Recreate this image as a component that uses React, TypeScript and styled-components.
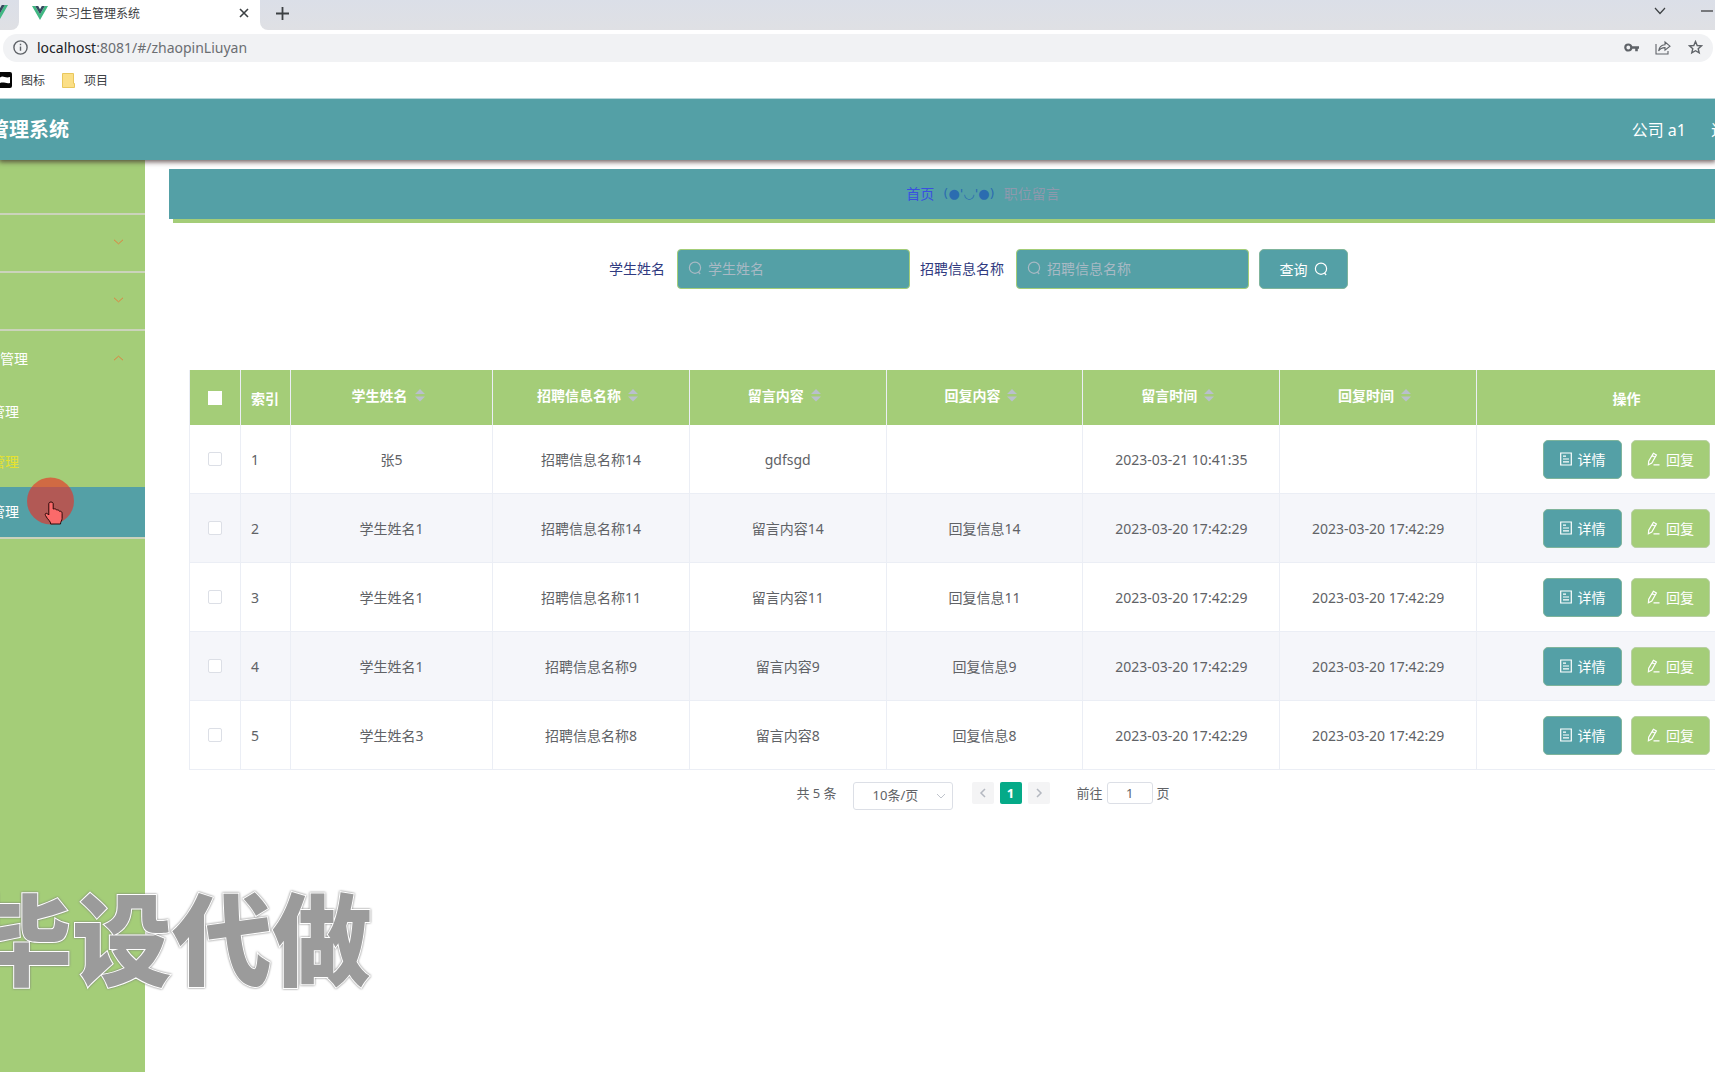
import React, { useState } from "react";
import styled, { createGlobalStyle } from "styled-components";

const teal = "#54a0a6";
const green = "#a4cd78";
const line = "#ebeef5";

const GlobalStyle = createGlobalStyle`
  *, *::before, *::after { box-sizing: border-box; }
  html, body, #root { height: 100%; }
  body {
    margin: 0;
    overflow: hidden;
    background: #fff;
    color: #606266;
    font-family: "Noto Sans", "Noto Sans CJK SC", sans-serif;
    font-size: 14px;
  }
  button, input, select { font: inherit; margin: 0; }
  button { cursor: pointer; padding: 0; border: 0; background: none; }
  a { text-decoration: none; }
`;

const Screen = styled.div`
  display: flex;
  flex-direction: column;
  height: 100%;
  overflow: hidden;
`;

/* Browser window */

const TabStrip = styled.div`
  display: flex;
  align-items: stretch;
  height: 30px;
  flex: none;
  background: #fff;
  color: #3c4043;
`;

const PreviousTab = styled.div`
  width: 19px;
  padding-top: 5px;
  overflow: hidden;
  border-bottom-right-radius: 8px;
  background: linear-gradient(#dbdfe8, #dfe0e4);
  svg { display: block; margin-left: -8px; }
`;

const ActiveTab = styled.div`
  display: flex;
  align-items: center;
  gap: 8px;
  width: 241px;
  padding: 0 11px 4px 13px;
  background: #fff;
  font-size: 12px;
  span { flex: 1; }
`;

const IconButton = styled.button`
  display: flex;
  align-items: center;
  justify-content: center;
  color: #3c4043;
`;

const StripRest = styled.div`
  flex: 1;
  display: flex;
  align-items: center;
  justify-content: space-between;
  padding: 0 0 4px 16px;
  background: linear-gradient(#dbdfe8, #dfe0e4);
  border-bottom-left-radius: 8px;
`;

const WindowControls = styled.div`
  display: flex;
  gap: 35px;
  margin: -4px -2px 0 0;
`;

const AddressBar = styled.div`
  flex: none;
  display: flex;
  align-items: center;
  gap: 9px;
  height: 28px;
  margin: 4px 2px 4px 3px;
  padding: 0 10px 2px 10px;
  border-radius: 14px;
  background: #f1f2f4;
  color: #5f6368;
`;

const Address = styled.div`
  flex: 1;
  color: #6b6e72;
  b { font-weight: 400; color: #202124; }
`;

const AddressActions = styled.div`
  display: flex;
  gap: 16px;
  ${IconButton} { width: 16px; height: 16px; color: #5f6368; }
`;

const Bookmarks = styled.nav`
  flex: none;
  display: flex;
  align-items: center;
  gap: 17px;
  height: 32px;
  padding-bottom: 4px;
  margin-left: -3px;
  font-size: 12px;
`;

const Bookmark = styled.a`
  display: flex;
  align-items: center;
  gap: 9px;
  color: #3c4043;
`;

/* Application shell */

const Header = styled.header`
  position: relative;
  z-index: 1;
  flex: none;
  display: flex;
  align-items: center;
  justify-content: space-between;
  height: 62px;
  padding-bottom: 2px;
  background: ${teal};
  border-top: 1px solid #b8d6da;
  box-shadow: 0 1px 5px 1px rgba(60, 40, 40, 0.75);
  clip-path: inset(0 0 -12px 0);
  color: #fff;
`;

const SystemName = styled.h1`
  margin: 0 0 0 -11px;
  font-size: 20px;
  font-weight: 700;
`;

const Account = styled.div`
  display: flex;
  gap: 25px;
  margin-right: -12px;
  font-size: 16px;
  white-space: nowrap;
  a { color: #fff; }
`;

const Body = styled.div`
  flex: 1;
  min-height: 0;
  display: flex;
`;

const Sidebar = styled.aside`
  flex: none;
  width: 145px;
  margin-top: -3px;
  background: ${green};
  overflow: hidden;
`;

const MenuGroup = styled.div`
  border-bottom: 2px solid #cbd3bb;
`;

const MenuTitle = styled.button`
  display: flex;
  align-items: center;
  justify-content: space-between;
  width: 100%;
  height: 56px;
  padding: 0 21px 2px 0;
  color: #fff;
`;

const MenuChevron = styled.svg`
  margin-left: auto;
`;

const MenuItem = styled.a<{ $state?: "current" | "hover" }>`
  display: flex;
  align-items: center;
  height: 50px;
  padding-bottom: 2px;
  color: ${(p) => (p.$state === "current" ? "#e6e22e" : "#fff")};
  background: ${(p) => (p.$state === "hover" ? teal : "transparent")};
  span { margin-left: -9px; }
`;

const Main = styled.main`
  flex: none;
  width: calc(100% - 63px);
  padding: 9px 0 0 24px;
`;

const Crumbs = styled.nav`
  display: flex;
  align-items: center;
  justify-content: center;
  gap: 9px;
  height: 50px;
  padding-bottom: 2px;
  background: ${teal};
  box-shadow: 4px 4px 0 ${green};
  color: #8d99ad;
  a { color: #3a4fe0; }
`;

const Kaomoji = styled.span`
  color: #2b6cb0;
  font-family: "DejaVu Sans", sans-serif;
  font-size: 13px;
`;

const Content = styled.section`
  padding: 30px 20px 0;
`;

const SearchForm = styled.form`
  display: flex;
  justify-content: center;
  gap: 10px;
  margin-left: -9px;
`;

const Field = styled.div`
  display: flex;
  align-items: center;
  gap: 12px;
  label { padding-bottom: 2px; color: #303a80; }
`;

const SearchBox = styled.div`
  display: flex;
  align-items: center;
  gap: 6px;
  width: 233px;
  height: 40px;
  padding: 0 10px 2px;
  border: 1px solid ${green};
  border-radius: 4px;
  background: ${teal};
  color: #a8b9c4;
  input {
    flex: 1;
    min-width: 0;
    padding: 0;
    border: 0;
    outline: 0;
    background: none;
    color: #fff;
    &::placeholder { color: #a8b9c4; opacity: 1; }
  }
`;

const Button = styled.button<{ $tone: "teal" | "green"; $wide?: boolean }>`
  display: inline-flex;
  align-items: center;
  justify-content: center;
  gap: 6px;
  width: ${(p) => (p.$wide ? 89 : 79)}px;
  height: ${(p) => (p.$wide ? 40 : 39)}px;
  border: 1px solid ${(p) => (p.$tone === "teal" ? "#7fb49c" : "#b9d0a4")};
  border-radius: 5px;
  background: ${(p) => (p.$tone === "teal" ? teal : green)};
  color: #fff;
`;

const Table = styled.table`
  width: 100%;
  margin-top: 81px;
  table-layout: fixed;
  border-collapse: separate;
  border-spacing: 0;
  border-left: 1px solid ${line};
  text-align: center;
`;

const Col = styled.col<{ $w?: number }>`
  ${(p) => p.$w && `width: ${p.$w}px;`}
`;

const Th = styled.th<{ $left?: boolean }>`
  height: 55px;
  padding: 0 ${(p) => (p.$left ? 10 : 0)}px;
  background: ${green};
  border-right: 1px solid ${line};
  color: #fff;
  font-weight: 700;
  text-align: ${(p) => (p.$left ? "left" : "center")};
`;

const SortLabel = styled.span`
  display: flex;
  align-items: center;
  justify-content: center;
  padding-bottom: 5px;
`;

const Row = styled.tr`
  &:nth-child(even) { background: #f5f6fa; }
`;

const Td = styled.td<{ $left?: boolean }>`
  height: 69px;
  padding: 0 ${(p) => (p.$left ? 10 : 0)}px;
  border-right: 1px solid ${line};
  border-bottom: 1px solid ${line};
  text-align: ${(p) => (p.$left ? "left" : "center")};
`;

const Check = styled.input<{ $head?: boolean }>`
  appearance: none;
  display: block;
  width: 14px;
  height: 14px;
  margin: 0 auto;
  border: 1px solid ${(p) => (p.$head ? "#fff" : "#dcdfe6")};
  border-radius: ${(p) => (p.$head ? 0 : 2)}px;
  background: #fff;
  &:checked { background: ${teal}; }
`;

const Actions = styled.div`
  display: flex;
  justify-content: center;
  gap: 9px;
`;

const Pagination = styled.div`
  display: flex;
  justify-content: center;
  align-items: flex-start;
  padding-top: 12px;
  font-size: 13px;
  line-height: 22px;
`;

const PageSize = styled.div`
  position: relative;
  margin: 0 19px 0 16px;
  select {
    appearance: none;
    display: block;
    width: 100px;
    height: 28px;
    padding: 0 0 2px 19px;
    border: 1px solid #dcdfe6;
    border-radius: 3px;
    background: #fff;
    color: #606266;
  }
  svg { position: absolute; right: 7px; top: 9px; pointer-events: none; }
`;

const Pager = styled.div`
  display: flex;
  gap: 6px;
  margin-right: 27px;
`;

const PageButton = styled.button<{ $on?: boolean }>`
  display: flex;
  align-items: center;
  justify-content: center;
  width: 22px;
  height: 22px;
  border-radius: 2px;
  background: ${(p) => (p.$on ? "#05aa88" : "#f4f4f5")};
  color: ${(p) => (p.$on ? "#fff" : "#b4b8c0")};
  font-weight: 700;
`;

const Jump = styled.label`
  display: flex;
  gap: 4px;
  input {
    width: 46px;
    height: 22px;
    padding: 0;
    border: 1px solid #dcdfe6;
    border-radius: 3px;
    color: #606266;
    text-align: center;
  }
`;

/* Overlays */

const Watermark = styled.div`
  position: absolute;
  left: -28px;
  top: 862px;
  z-index: 2;
  color: #9b9b9b;
  font-family: "Noto Sans CJK SC", sans-serif;
  font-size: 100px;
  font-weight: 900;
  line-height: 146px;
  white-space: nowrap;
  pointer-events: none;
  paint-order: stroke fill;
  -webkit-text-stroke: 2px #fff;
  filter: drop-shadow(0 0 1px #777);
`;

const Pointer = styled.svg`
  position: absolute;
  left: 26px;
  top: 477px;
  z-index: 3;
  pointer-events: none;
`;

const VueLogo = () => (
  <svg width="16" height="14" viewBox="0 0 16 14" aria-hidden="true">
    <path d="M0 0h3.2L8 8.3 12.8 0H16L8 14z" fill="#41b883" />
    <path d="M3.2 0h3L8 3.2 9.8 0h3L8 8.3z" fill="#35495e" />
  </svg>
);

const SearchIcon = () => (
  <svg width="14" height="14" viewBox="0 0 14 14" fill="none" stroke="currentColor" strokeWidth="1.2" aria-hidden="true">
    <circle cx="7" cy="6.7" r="5.6" />
    <path d="M10.4 11 12.2 13" />
  </svg>
);

const DocIcon = () => (
  <svg width="12" height="14" viewBox="0 0 12 14" fill="none" stroke="currentColor" strokeWidth="1.2" aria-hidden="true">
    <path d="M.7 1h10.6v12H.7zM3 4.2h3M3 7h6M3 9.8h6" />
  </svg>
);

const PenIcon = () => (
  <svg width="13" height="14" viewBox="0 0 13 14" fill="none" stroke="currentColor" strokeWidth="1.2" aria-hidden="true">
    <path d="M6.4 1.3 9.4 3 4.8 11 1.4 12.8 1.7 9.2zM5.1 3.6l3 1.7M6.5 12.9H12.5" />
  </svg>
);

const Chevron = ({ up }: { up?: boolean }) => (
  <MenuChevron width="11" height="6" viewBox="0 0 11 6" fill="none" stroke="#e0803f" aria-hidden="true">
    <path d={up ? "M1 5.2 5.5 1.2l4.5 4" : "M1 .8l4.5 4 4.5-4"} />
  </MenuChevron>
);

const sortable = ["学生姓名", "招聘信息名称", "留言内容", "回复内容", "留言时间", "回复时间"];

const rows = [
  ["张5", "招聘信息名称14", "gdfsgd", "", "2023-03-21 10:41:35", ""],
  ["学生姓名1", "招聘信息名称14", "留言内容14", "回复信息14", "2023-03-20 17:42:29", "2023-03-20 17:42:29"],
  ["学生姓名1", "招聘信息名称11", "留言内容11", "回复信息11", "2023-03-20 17:42:29", "2023-03-20 17:42:29"],
  ["学生姓名1", "招聘信息名称9", "留言内容9", "回复信息9", "2023-03-20 17:42:29", "2023-03-20 17:42:29"],
  ["学生姓名3", "招聘信息名称8", "留言内容8", "回复信息8", "2023-03-20 17:42:29", "2023-03-20 17:42:29"],
];

function BrowserBar() {
  return (
    <>
      <TabStrip>
        <PreviousTab>
          <VueLogo />
        </PreviousTab>
        <ActiveTab>
          <VueLogo />
          <span>实习生管理系统</span>
          <IconButton aria-label="关闭标签页">
            <svg width="10" height="10" viewBox="0 0 10 10" stroke="currentColor" strokeWidth="1.6">
              <path d="M1 1l8 8M9 1 1 9" />
            </svg>
          </IconButton>
        </ActiveTab>
        <StripRest>
          <IconButton aria-label="新建标签页">
            <svg width="13" height="13" viewBox="0 0 13 13" stroke="currentColor" strokeWidth="1.8">
              <path d="M6.5 0v13M0 6.5h13" />
            </svg>
          </IconButton>
          <WindowControls>
            <IconButton aria-label="搜索标签页">
              <svg width="12" height="8" viewBox="0 0 12 8" fill="none" stroke="currentColor" strokeWidth="1.2">
                <path d="M1 1l5 5.5L11 1" />
              </svg>
            </IconButton>
            <IconButton aria-label="最小化">
              <svg width="16" height="2" viewBox="0 0 16 2">
                <path d="M0 .5h12v1H0z" fill="#111" />
              </svg>
            </IconButton>
          </WindowControls>
        </StripRest>
      </TabStrip>
      <AddressBar>
        <svg width="15" height="15" viewBox="0 0 15 15" fill="none" stroke="currentColor" strokeWidth="1.4" aria-hidden="true">
          <circle cx="7.5" cy="7.5" r="6.6" />
          <path d="M7.5 6.6v4.2M7.5 3.8v1.5" />
        </svg>
        <Address>
          <b>localhost</b>:8081/#/zhaopinLiuyan
        </Address>
        <AddressActions>
          <IconButton aria-label="密码">
            <svg width="15" height="9" viewBox="0 0 15 9" aria-hidden="true">
              <circle cx="4.3" cy="4.5" r="3" fill="none" stroke="currentColor" strokeWidth="2.2" />
              <path d="M7 3.2h8v2.5h-1.2v2.6h-2.6V5.7H7z" fill="currentColor" />
            </svg>
          </IconButton>
          <IconButton aria-label="分享">
            <svg width="16" height="15" viewBox="0 0 16 15" fill="none" stroke="currentColor" strokeWidth="1.1">
              <path d="M1 4v10h12v-3M3.6 11C4 7.4 6.3 5 10 4.7V2l5 4.2-5 4V7.6C7 7.7 5 8.7 3.6 11z" />
            </svg>
          </IconButton>
          <IconButton aria-label="收藏">
            <svg width="15" height="15" viewBox="0 0 15 15" fill="none" stroke="currentColor" strokeWidth="1.4">
              <path d="M7.5 1.5 9.2 5.5l4.3.4-3.3 2.8 1 4.2-3.7-2.2-3.7 2.2 1-4.2L1.5 5.9l4.3-.4z" />
            </svg>
          </IconButton>
        </AddressActions>
      </AddressBar>
      <Bookmarks aria-label="书签">
        <Bookmark href="#icons">
          <svg width="15" height="16" viewBox="0 0 15 16" aria-hidden="true">
            <rect width="15" height="16" rx="2" fill="#050505" />
            <path d="M3 5.500c3-2.500 5 1 10-.5v6c-4 1-6-1.500-10 0z" fill="#fff" />
          </svg>
          图标
        </Bookmark>
        <Bookmark href="#projects">
          <svg width="13" height="15" viewBox="0 0 13 15" aria-hidden="true">
            <path d="M.5.5h11v10h1v4H.5z" fill="#fbdf86" stroke="#e9c75c" />
          </svg>
          项目
        </Bookmark>
      </Bookmarks>
    </>
  );
}

export default function App() {
  const [checked, setChecked] = useState<number[]>([]);
  const allChecked = checked.length === rows.length;
  const toggle = (i: number) =>
    setChecked((c) => (c.includes(i) ? c.filter((n) => n !== i) : [...c, i]));

  return (
    <Screen>
      <GlobalStyle />
      <BrowserBar />
      <Header>
        <SystemName>管理系统</SystemName>
        <Account>
          <span>公司 a1</span>
          <a href="#logout">退</a>
        </Account>
      </Header>
      <Body>
        <Sidebar>
          <MenuGroup><MenuTitle aria-label="首页" /></MenuGroup>
          <MenuGroup><MenuTitle aria-label="展开菜单"><Chevron /></MenuTitle></MenuGroup>
          <MenuGroup><MenuTitle aria-label="展开菜单"><Chevron /></MenuTitle></MenuGroup>
          <MenuGroup>
            <MenuTitle><span>管理</span><Chevron up /></MenuTitle>
            <MenuItem href="#a"><span>管理</span></MenuItem>
            <MenuItem href="#b" $state="current"><span>管理</span></MenuItem>
            <MenuItem href="#c" $state="hover"><span>管理</span></MenuItem>
          </MenuGroup>
        </Sidebar>
        <Main>
          <Crumbs>
            <a href="#home">首页</a>
            <Kaomoji>(●'◡'●)</Kaomoji>
            <span>职位留言</span>
          </Crumbs>
          <Content>
            <SearchForm onSubmit={(e) => e.preventDefault()}>
              <Field>
                <label htmlFor="student">学生姓名</label>
                <SearchBox><SearchIcon /><input id="student" placeholder="学生姓名" /></SearchBox>
              </Field>
              <Field>
                <label htmlFor="job">招聘信息名称</label>
                <SearchBox><SearchIcon /><input id="job" placeholder="招聘信息名称" /></SearchBox>
              </Field>
              <Button $tone="teal" $wide type="submit">查询<SearchIcon /></Button>
            </SearchForm>
            <Table>
              <colgroup>
                <Col $w={51} /><Col $w={50} /><Col $w={202} />
                <Col /><Col /><Col /><Col /><Col />
                <Col $w={300} />
              </colgroup>
              <thead>
                <tr>
                  <Th>
                    <Check
                      $head
                      type="checkbox"
                      aria-label="全选"
                      checked={allChecked}
                      onChange={() => setChecked(allChecked ? [] : rows.map((_, i) => i))}
                    />
                  </Th>
                  <Th $left>索引</Th>
                  {sortable.map((name) => (
                    <Th key={name}>
                      <SortLabel>
                        {name}
                        <svg width="24" height="14" viewBox="0 0 24 14" fill="#b9c0cc" aria-hidden="true">
                          <path d="M7 6l5-5 5 5zM7 8.5h10l-5 5z" />
                        </svg>
                      </SortLabel>
                    </Th>
                  ))}
                  <Th>操作</Th>
                </tr>
              </thead>
              <tbody>
                {rows.map((row, i) => (
                  <Row key={i}>
                    <Td>
                      <Check
                        type="checkbox"
                        aria-label={`选择第${i + 1}行`}
                        checked={checked.includes(i)}
                        onChange={() => toggle(i)}
                      />
                    </Td>
                    <Td $left>{i + 1}</Td>
                    {row.map((cell, c) => <Td key={c}>{cell}</Td>)}
                    <Td>
                      <Actions>
                        <Button $tone="teal"><DocIcon />详情</Button>
                        <Button $tone="green"><PenIcon />回复</Button>
                      </Actions>
                    </Td>
                  </Row>
                ))}
              </tbody>
            </Table>
            <Pagination>
              <span>共 5 条</span>
              <PageSize>
                <select aria-label="每页条数" defaultValue="10">
                  <option value="10">10条/页</option>
                </select>
                <svg width="10" height="10" viewBox="0 0 10 10" fill="none" stroke="#c0c4cc" aria-hidden="true">
                  <path d="M1 3l4 4 4-4" />
                </svg>
              </PageSize>
              <Pager>
                <PageButton aria-label="上一页">
                  <svg width="8" height="10" viewBox="0 0 8 10" fill="none" stroke="currentColor" strokeWidth="1.5"><path d="M6 1 2 5l4 4" /></svg>
                </PageButton>
                <PageButton $on>1</PageButton>
                <PageButton aria-label="下一页">
                  <svg width="8" height="10" viewBox="0 0 8 10" fill="none" stroke="currentColor" strokeWidth="1.5"><path d="M2 1l4 4-4 4" /></svg>
                </PageButton>
              </Pager>
              <Jump>前往<input defaultValue="1" />页</Jump>
            </Pagination>
          </Content>
        </Main>
      </Body>
      <Watermark>毕设代做</Watermark>
      <Pointer width="48" height="52" viewBox="0 0 48 52" aria-hidden="true">
        <circle cx="24.5" cy="24" r="23.5" fill="rgba(235, 45, 35, 0.62)" />
        <path
          d="M25 25c1.700 0 2.200 1 2.200 2v5c2-.5 3 0 3.300 1 1.700-.3 2.500.2 2.800 1.200 2-.2 2.800.8 2.800 2.300v5c0 2-1.600 3-1.600 5.500h-9.800c0-3-3-4-5.200-8.500-1-2 .8-3.500 3.300-.5V27c0-1.200.7-2 2.200-2z"
          fill="#fb6a6a"
          stroke="#2a0808"
        />
      </Pointer>
    </Screen>
  );
}
